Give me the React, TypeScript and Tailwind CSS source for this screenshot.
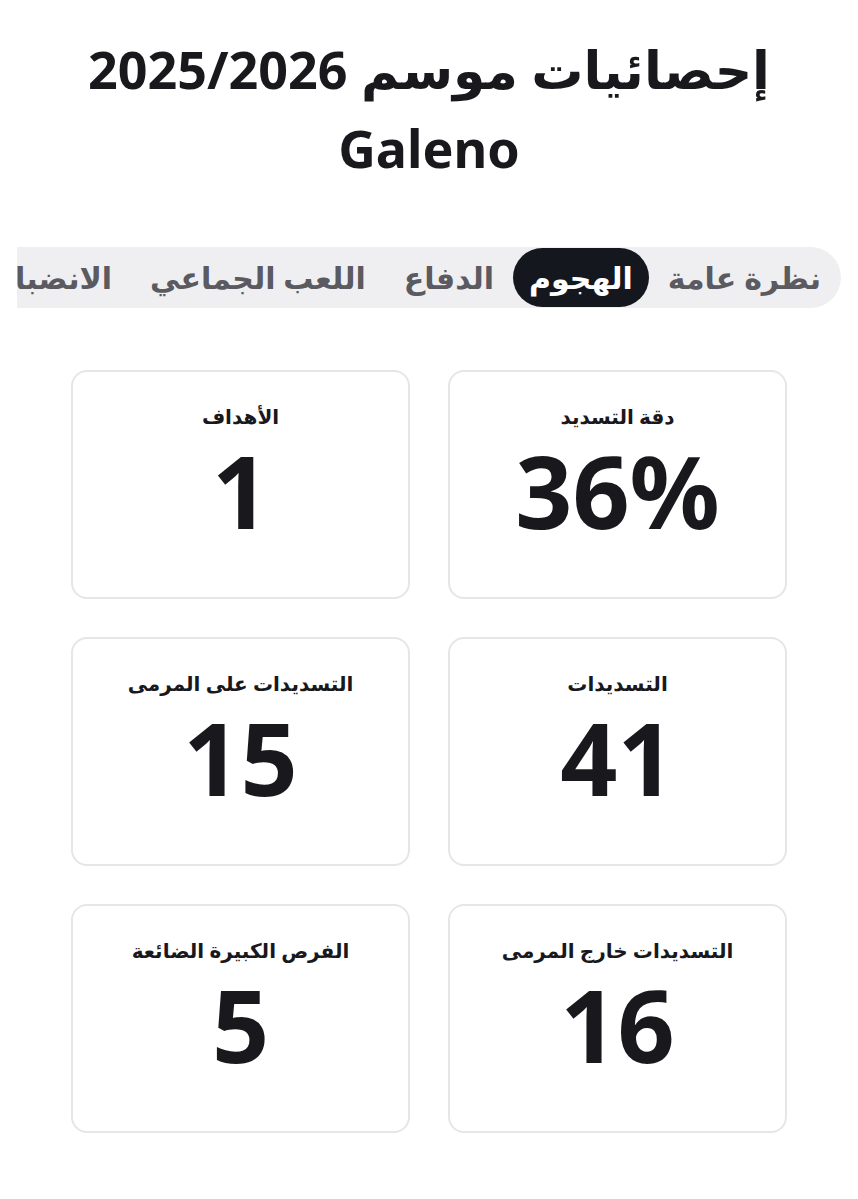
const tabs = [
  { label: 'نظرة عامة', active: false },
  { label: 'الهجوم', active: true },
  { label: 'الدفاع', active: false },
  { label: 'اللعب الجماعي', active: false },
  { label: 'الانضباط', active: false },
]

const stats = [
  { label: 'دقة التسديد', value: '36%' },
  { label: 'الأهداف', value: '1' },
  { label: 'التسديدات', value: '41' },
  { label: 'التسديدات على المرمى', value: '15' },
  { label: 'التسديدات خارج المرمى', value: '16' },
  { label: 'الفرص الكبيرة الضائعة', value: '5' },
]

export default function App() {
  return (
    <div
      dir="rtl"
      className="min-h-[1199px] w-[858px] bg-white text-[#18181d]"
      style={{ fontFamily: '"Noto Sans", "DejaVu Sans", sans-serif' }}
    >
      {/* Title */}
      <header className="pt-[28px] text-center">
        <h1 className="text-[52px] font-bold leading-[82px]">
          إحصائيات موسم 2025/2026
        </h1>
        <h2 className="text-[52px] font-bold leading-[76px]">Galeno</h2>
      </header>

      {/* Tabs */}
      <div className="mx-[17px] mt-[61px] overflow-hidden">
        <div className="flex w-max items-center rounded-full bg-[#efeff1] p-px">
          {tabs.map((t) => (
            <div
              key={t.label}
              className={
                t.active
                  ? 'flex h-[59px] items-center whitespace-nowrap rounded-full bg-[#15171e] px-[16px] text-[30px] font-bold text-white'
                  : 'flex h-[59px] items-center whitespace-nowrap px-[19px] text-[30px] font-bold text-[#5a5a60]'
              }
            >
              {t.label}
            </div>
          ))}
        </div>
      </div>

      {/* Cards */}
      <main className="grid grid-cols-2 gap-[38px] px-[71px] pt-[62px]">
        {stats.map((s) => (
          <StatCard key={s.label} label={s.label} value={s.value} />
        ))}
      </main>
    </div>
  )
}

function StatCard({ label, value }: { label: string; value: string }) {
  return (
    <div className="flex h-[229px] flex-col items-center rounded-[16px] border-2 border-[#e6e6e9] pt-[28px]">
      <div className="text-[20px] font-bold leading-[34px]">{label}</div>
      <div className="mt-[6px] text-[100px] font-bold leading-[100px]" dir="ltr">
        {value}
      </div>
    </div>
  )
}
